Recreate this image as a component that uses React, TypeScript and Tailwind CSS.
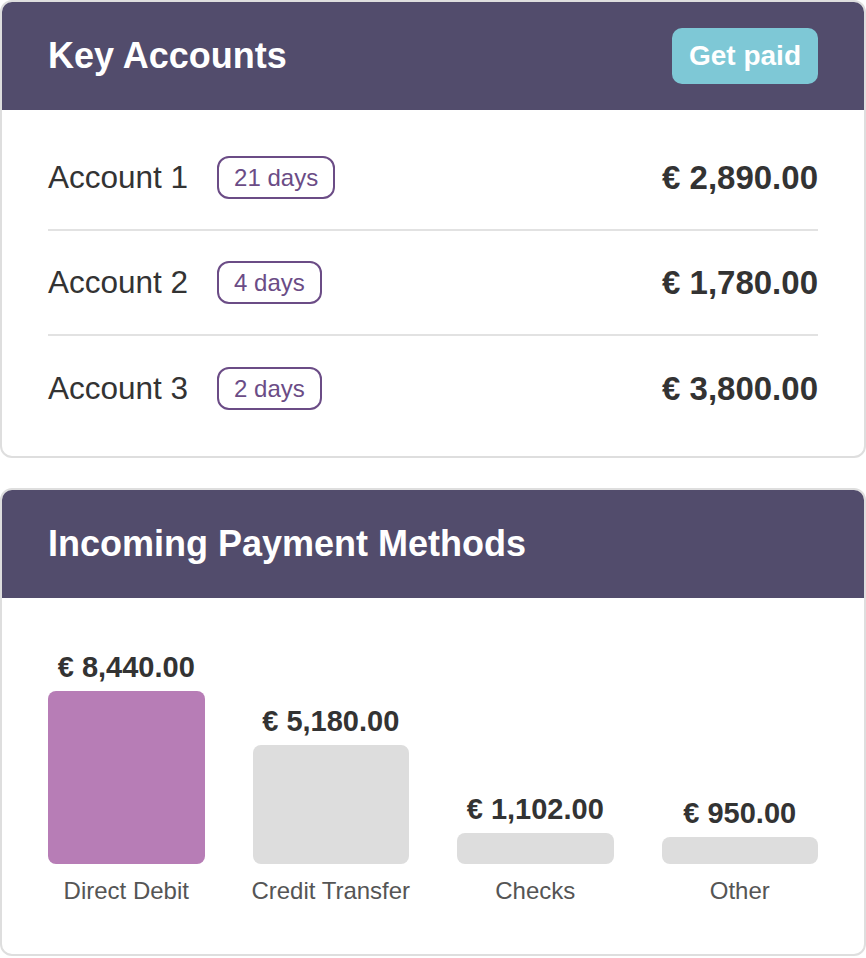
import React from 'react';

type Account = { name: string; days: string; amount: string };
type Method = { label: string; amount: string; barClass: string };

const accounts: Account[] = [
  { name: 'Account 1', days: '21 days', amount: '€ 2,890.00' },
  { name: 'Account 2', days: '4 days', amount: '€ 1,780.00' },
  { name: 'Account 3', days: '2 days', amount: '€ 3,800.00' },
];

const methods: Method[] = [
  { label: 'Direct Debit', amount: '€ 8,440.00', barClass: 'h-[173px] bg-[#b77db6]' },
  { label: 'Credit Transfer', amount: '€ 5,180.00', barClass: 'h-[119px] bg-[#dddddd]' },
  { label: 'Checks', amount: '€ 1,102.00', barClass: 'h-[31px] bg-[#dddddd]' },
  { label: 'Other', amount: '€ 950.00', barClass: 'h-[27px] bg-[#dddddd]' },
];

const CardHeader: React.FC<{ title: string; children?: React.ReactNode }> = ({ title, children }) => (
  <div className="h-[108px] bg-[#524c6c] px-[46px] flex items-center justify-between">
    <h2 className="text-[36px] font-bold text-white leading-none">{title}</h2>
    {children}
  </div>
);

const App: React.FC = () => {
  return (
    <div
      className="w-[866px] bg-white"
      style={{ fontFamily: '"Liberation Sans", Arial, Helvetica, sans-serif' }}
    >
      {/* Key Accounts */}
      <div className="border-2 border-[#dedede] rounded-[12px] overflow-hidden bg-white">
        <CardHeader title="Key Accounts">
          <button className="h-[56px] w-[146px] rounded-[10px] bg-[#7ec8d6] text-white text-[28px] font-bold leading-none">
            Get paid
          </button>
        </CardHeader>
        <div className="px-[46px] pt-[16px] pb-[15px]">
          {accounts.map((a, i) => (
            <div
              key={a.name}
              className={`h-[105px] flex items-center justify-between ${
                i < accounts.length - 1 ? 'border-b-2 border-[#e2e2e2]' : ''
              }`}
            >
              <div className="flex items-center gap-[29px]">
                <span className="text-[31.5px] text-[#333333] leading-none">{a.name}</span>
                <span className="border-2 border-[#6b4c86] rounded-[12px] px-[15px] h-[43px] flex items-center text-[24px] text-[#6b4c86] leading-none">
                  {a.days}
                </span>
              </div>
              <span className="text-[33px] font-bold text-[#333333] leading-none">{a.amount}</span>
            </div>
          ))}
        </div>
      </div>

      {/* Incoming Payment Methods */}
      <div className="mt-[30px] border-2 border-[#dedede] rounded-[12px] overflow-hidden bg-white">
        <CardHeader title="Incoming Payment Methods" />
        <div className="px-[46px] pt-[52px] pb-[49px] grid grid-cols-4 gap-[48px] items-end">
          {methods.map((m) => (
            <div key={m.label} className="flex flex-col items-center min-w-0">
              <span className="text-[29px] font-bold text-[#333333] leading-[34px] whitespace-nowrap">{m.amount}</span>
              <div className={`mt-[7px] w-full rounded-[8px] ${m.barClass}`} />
              <span className="mt-[13px] text-[24px] text-[#555555] leading-[28px] whitespace-nowrap">{m.label}</span>
            </div>
          ))}
        </div>
      </div>
    </div>
  );
};

export default App;
